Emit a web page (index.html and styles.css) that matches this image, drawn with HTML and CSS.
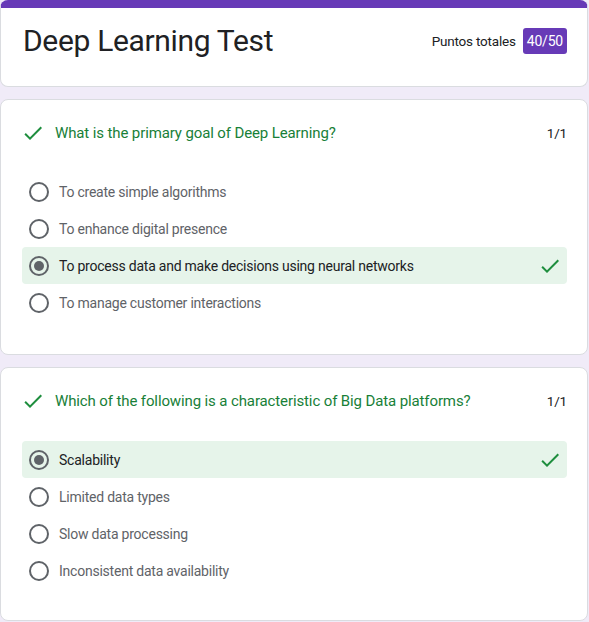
FILE: index.html
```html
<!DOCTYPE html>
<html lang="en">
<head>
<meta charset="utf-8">
<link rel="stylesheet" href="styles.css">
</head>
<body>
<div class="page">
  <div class="card header-card">
    <h1 class="title">Deep Learning Test</h1>
    <div class="score">
      <span class="score-label">Puntos totales</span>
      <span class="badge">40/50</span>
    </div>
  </div>

  <div class="card q-card">
    <div class="q-head">
      <svg class="check" viewBox="0 0 24 24" width="24" height="24"><path d="M9 16.17L4.83 12l-1.42 1.41L9 19 21 7l-1.41-1.41z"/></svg>
      <span class="q-text">What is the primary goal of Deep Learning?</span>
      <span class="q-points">1/1</span>
    </div>
    <div class="options">
      <div class="opt"><span class="radio"></span><span class="opt-text">To create simple algorithms</span></div>
      <div class="opt"><span class="radio"></span><span class="opt-text">To enhance digital presence</span></div>
      <div class="opt correct"><span class="radio on"></span><span class="opt-text">To process data and make decisions using neural networks</span>
        <svg class="check end" viewBox="0 0 24 24" width="24" height="24"><path d="M9 16.17L4.83 12l-1.42 1.41L9 19 21 7l-1.41-1.41z"/></svg></div>
      <div class="opt"><span class="radio"></span><span class="opt-text">To manage customer interactions</span></div>
    </div>
  </div>

  <div class="card q-card last">
    <div class="q-head">
      <svg class="check" viewBox="0 0 24 24" width="24" height="24"><path d="M9 16.17L4.83 12l-1.42 1.41L9 19 21 7l-1.41-1.41z"/></svg>
      <span class="q-text">Which of the following is a characteristic of Big Data platforms?</span>
      <span class="q-points">1/1</span>
    </div>
    <div class="options">
      <div class="opt correct"><span class="radio on"></span><span class="opt-text">Scalability</span>
        <svg class="check end" viewBox="0 0 24 24" width="24" height="24"><path d="M9 16.17L4.83 12l-1.42 1.41L9 19 21 7l-1.41-1.41z"/></svg></div>
      <div class="opt"><span class="radio"></span><span class="opt-text">Limited data types</span></div>
      <div class="opt"><span class="radio"></span><span class="opt-text">Slow data processing</span></div>
      <div class="opt"><span class="radio"></span><span class="opt-text">Inconsistent data availability</span></div>
    </div>
  </div>
</div>
</body>
</html>
```

FILE: styles.css
```css
* { box-sizing: border-box; }
html, body {
  margin: 0;
  padding: 0;
  background: #f0ebf8;
  font-family: Roboto, "Liberation Sans", Arial, sans-serif;
  color: #202124;
}
.page {
  display: flex;
  flex-direction: column;
  gap: 12px;
  width: 588px;
}
.card {
  background: #fff;
  border: 1px solid #dadce0;
  border-radius: 8px;
}
.header-card {
  border-top: 8px solid #673ab7;
  display: flex;
  align-items: center;
  justify-content: space-between;
  padding: 13px 20px 25px 22px;
  height: 87px;
}
.title {
  margin: 0;
  font-size: 30px;
  font-weight: 400;
  line-height: 40px;
  letter-spacing: -0.33px;
  color: #202124;
}
.score {
  display: flex;
  align-items: center;
  gap: 7px;
  font-size: 13.5px;
  letter-spacing: -0.2px;
}
.badge {
  background: #673ab7;
  color: #fff;
  border-radius: 3px;
  height: 26px;
  line-height: 26px;
  padding: 0 4px;
  font-size: 14px;
  letter-spacing: -0.2px;
}
.q-card {
  padding: 21px 20px 33px 21px;
  height: 256px;
}
.q-card.last { height: 254px; }
.q-head {
  display: flex;
  align-items: center;
  height: 24px;
  margin-left: -1px;
}
.check { fill: #1e8e3e; flex: none; }
.q-head .check { margin-right: 10px; }
.q-text {
  flex: 1;
  color: #188038;
  font-size: 15px;
  letter-spacing: -0.12px;
}
.q-points {
  font-size: 13.5px;
  letter-spacing: -0.2px;
  color: #202124;
}
.options {
  margin-top: 28px;
  display: flex;
  flex-direction: column;
}
.opt {
  display: flex;
  align-items: center;
  height: 37px;
  padding: 0 5px 0 7px;
  border-radius: 4px;
}
.opt.correct { background: #e6f4ea; }
.radio {
  width: 20px;
  height: 20px;
  border: 2px solid #5f6368;
  border-radius: 50%;
  flex: none;
  margin-right: 10px;
  display: flex;
  align-items: center;
  justify-content: center;
}
.radio.on::after {
  content: "";
  width: 10px;
  height: 10px;
  border-radius: 50%;
  background: #5f6368;
}
.opt-text {
  flex: 1;
  font-size: 14px;
  letter-spacing: -0.23px;
  color: #5f6368;
}
.opt.correct .opt-text { color: #202124; }
```
